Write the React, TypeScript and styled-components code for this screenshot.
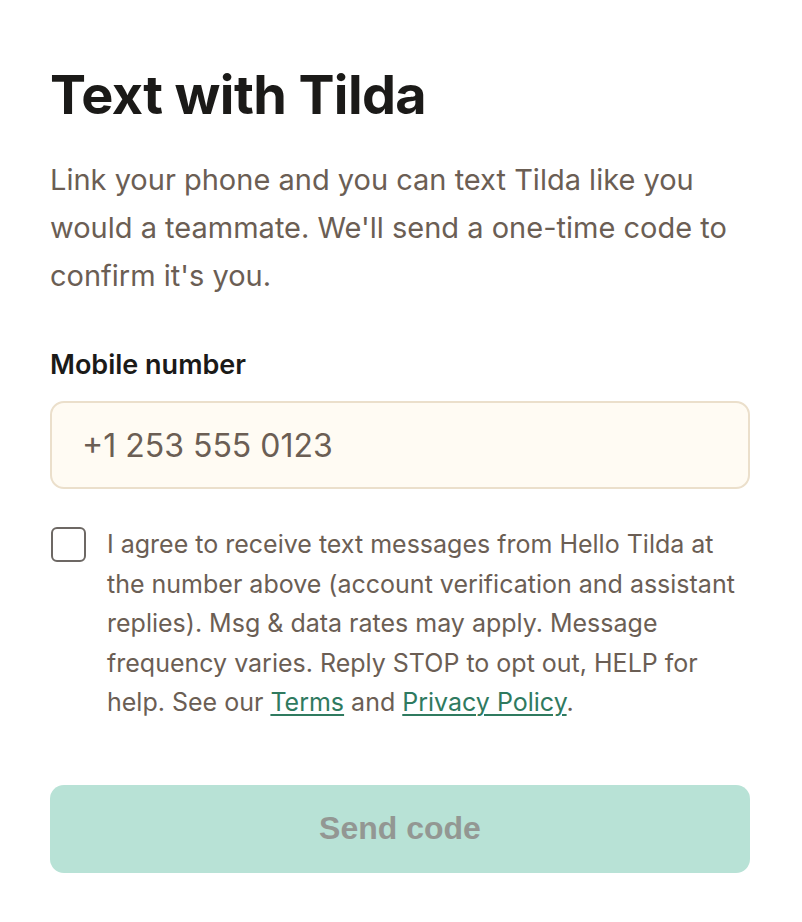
import React, { useState } from "react";
import styled, { createGlobalStyle } from "styled-components";

const GlobalStyle = createGlobalStyle`
  html, body {
    margin: 0;
    padding: 0;
    background: #ffffff;
  }
  body {
    font-family: Inter, "Noto Sans", "Liberation Sans", sans-serif;
    -webkit-font-smoothing: antialiased;
  }
  * { box-sizing: border-box; }
`;

const Page = styled.main`
  width: 802px;
  padding: 61px 52px 48px 50px;
  display: flex;
  flex-direction: column;
`;

const Title = styled.h1`
  margin: 0;
  font-size: 54px;
  line-height: 68px;
  font-weight: 700;
  letter-spacing: -0.6px;
  color: #1b1a18;
`;

const Intro = styled.p`
  margin: 27px 0 0;
  font-size: 29px;
  line-height: 48px;
  font-weight: 400;
  color: #6b5e54;
`;

const Field = styled.div`
  margin-top: 49px;
  display: flex;
  flex-direction: column;
  gap: 20px;
`;

const Label = styled.label`
  font-size: 27px;
  line-height: 32px;
  font-weight: 600;
  color: #1b1a18;
`;

const PhoneInput = styled.input`
  width: 100%;
  height: 88px;
  padding: 0 30px;
  border: 2px solid #ebdfcb;
  border-radius: 14px;
  background: #fffbf3;
  font-family: inherit;
  font-size: 32px;
  color: #1b1a18;
  outline: none;

  &::placeholder {
    color: #6b5e54;
  }
`;

const Consent = styled.label`
  margin-top: 36px;
  display: flex;
  align-items: flex-start;
  gap: 21px;
  cursor: pointer;
`;

const Box = styled.input`
  appearance: none;
  flex: 0 0 auto;
  width: 35px;
  height: 35px;
  margin: 2px 0 0 1px;
  border: 2px solid #6d6864;
  border-radius: 6px;
  background: #ffffff;
  cursor: pointer;

  &:checked {
    background: #2f7a5f;
    border-color: #2f7a5f;
  }
`;

const ConsentText = styled.span`
  font-size: 25px;
  line-height: 39.5px;
  color: #6b5e54;
`;

const Link = styled.a`
  color: #2f7a5f;
  text-decoration: underline;
  text-underline-offset: 3px;
  text-decoration-thickness: 2px;
`;

const SendButton = styled.button`
  margin-top: 62px;
  width: 100%;
  height: 88px;
  border: none;
  border-radius: 14px;
  background: #b8e2d6;
  font-family: "Liberation Sans", Arial, sans-serif;
  font-size: 32px;
  font-weight: 700;
  color: #939793;
  cursor: not-allowed;
`;

export default function App() {
  const [phone, setPhone] = useState("");
  const [agreed, setAgreed] = useState(false);
  const ready = agreed && phone.trim().length > 0;

  return (
    <>
      <GlobalStyle />
      <Page>
        <Title>Text with Tilda</Title>
        <Intro>
          Link your phone and you can text Tilda like you would a teammate.
          We'll send a one-time code to confirm it's you.
        </Intro>
        <Field>
          <Label htmlFor="mobile">Mobile number</Label>
          <PhoneInput
            id="mobile"
            type="tel"
            placeholder="+1 253 555 0123"
            value={phone}
            onChange={(e) => setPhone(e.target.value)}
          />
        </Field>
        <Consent>
          <Box
            type="checkbox"
            checked={agreed}
            onChange={(e) => setAgreed(e.target.checked)}
          />
          <ConsentText>
            I agree to receive text messages from Hello Tilda at the number
            above (account verification and assistant replies). Msg &amp; data
            rates may apply. Message frequency varies. Reply STOP to opt out,
            HELP for help. See our <Link href="#terms">Terms</Link> and{" "}
            <Link href="#privacy">Privacy Policy</Link>.
          </ConsentText>
        </Consent>
        <SendButton type="button" disabled={!ready}>
          Send code
        </SendButton>
      </Page>
    </>
  );
}
